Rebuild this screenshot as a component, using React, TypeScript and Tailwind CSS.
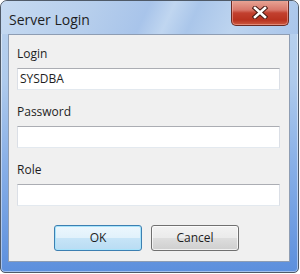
import React from "react";

function CloseX() {
  return (
    <svg width="16" height="13" viewBox="0 0 16 13">
      <path d="M3 2 L13 11 M13 2 L3 11" stroke="#4a1c16" strokeWidth="4.6" strokeLinecap="square" />
      <path d="M3 2 L13 11 M13 2 L3 11" stroke="#ffffff" strokeWidth="2.6" strokeLinecap="square" />
    </svg>
  );
}

function Field({ label, value }: { label: string; value?: string }) {
  return (
    <div className="flex flex-col">
      <div className="h-[16px] leading-[16px] text-[12px] text-[#1e1e1e]">{label}</div>
      <div className="mt-[6px] h-[22px] w-[263px] bg-white border border-t-[#abadb3] border-l-[#dbdfe6] border-r-[#dbdfe6] border-b-[#e3e9ef] pl-[2px] flex items-center">
        <span className="text-[12px] leading-[16px] text-[#1e1e1e]">{value ?? ""}</span>
      </div>
    </div>
  );
}

export default function App() {
  return (
    <div className="w-[300px] h-[274px] bg-white" style={{ fontFamily: '"Open Sans", "Noto Sans", sans-serif' }}>
      <div className="relative w-[299px] h-[273px] rounded-t-[7px] rounded-b-[5px] border border-[#4f5a68] bg-[linear-gradient(180deg,#bcd3ee_0%,#aecaec_30%,#86aee7_62%,#5c8fdd_100%)] shadow-[inset_0_0_0_1px_rgba(255,255,255,0.45)] flex flex-col overflow-hidden">
        <div className="h-[33px] shrink-0 pl-[8px] pt-[9px] rounded-t-[6px] bg-[linear-gradient(115deg,#c6daf1_0%,#b6ceec_30%,#a8c4ea_48%,#c0d6f0_56%,#aac6ea_64%,#bdd4ef_78%,#a9c5ea_100%)]">
          <div className="text-[14px] leading-[20px] text-[#1e1e1e]">Server Login</div>
        </div>
        <div className="absolute top-[-1px] right-[9px] w-[58px] h-[26px] rounded-b-[5px] border border-[#6b2a22] border-t-0 bg-[linear-gradient(180deg,#e9a899_0%,#d8776a_40%,#c2402f_52%,#b8321f_80%,#cd5a40_100%)] shadow-[inset_0_0_0_1px_rgba(255,200,190,0.45)] flex items-center justify-center">
          <CloseX />
        </div>
        <div className="ml-[7px] mr-[8px] h-[228px] border border-[#8e9db3] bg-[#f0f0f0] pt-[11px] pl-[8px] pr-[9px] flex flex-col">
          <Field label="Login" value="SYSDBA" />
          <div className="h-[14px]" />
          <Field label="Password" />
          <div className="h-[14px]" />
          <Field label="Role" />
          <div className="mt-[19px] ml-[37px] flex gap-[9px]">
            <div className="w-[88px] h-[26px] rounded-[3px] border border-[#3c7fb1] bg-[linear-gradient(180deg,#ecf7fd_0%,#e1f1fb_48%,#c6e4f7_52%,#b9dcf3_100%)] shadow-[inset_0_0_0_1px_#a7e3fb] flex items-center justify-center text-[12px] text-[#1e1e1e]">
              OK
            </div>
            <div className="w-[88px] h-[26px] rounded-[3px] border border-[#707070] bg-[linear-gradient(180deg,#f2f2f2_0%,#ebebeb_48%,#dddddd_52%,#cfcfcf_100%)] shadow-[inset_0_0_0_1px_rgba(255,255,255,0.7)] flex items-center justify-center text-[12px] text-[#1e1e1e]">
              Cancel
            </div>
          </div>
        </div>
      </div>
    </div>
  );
}
